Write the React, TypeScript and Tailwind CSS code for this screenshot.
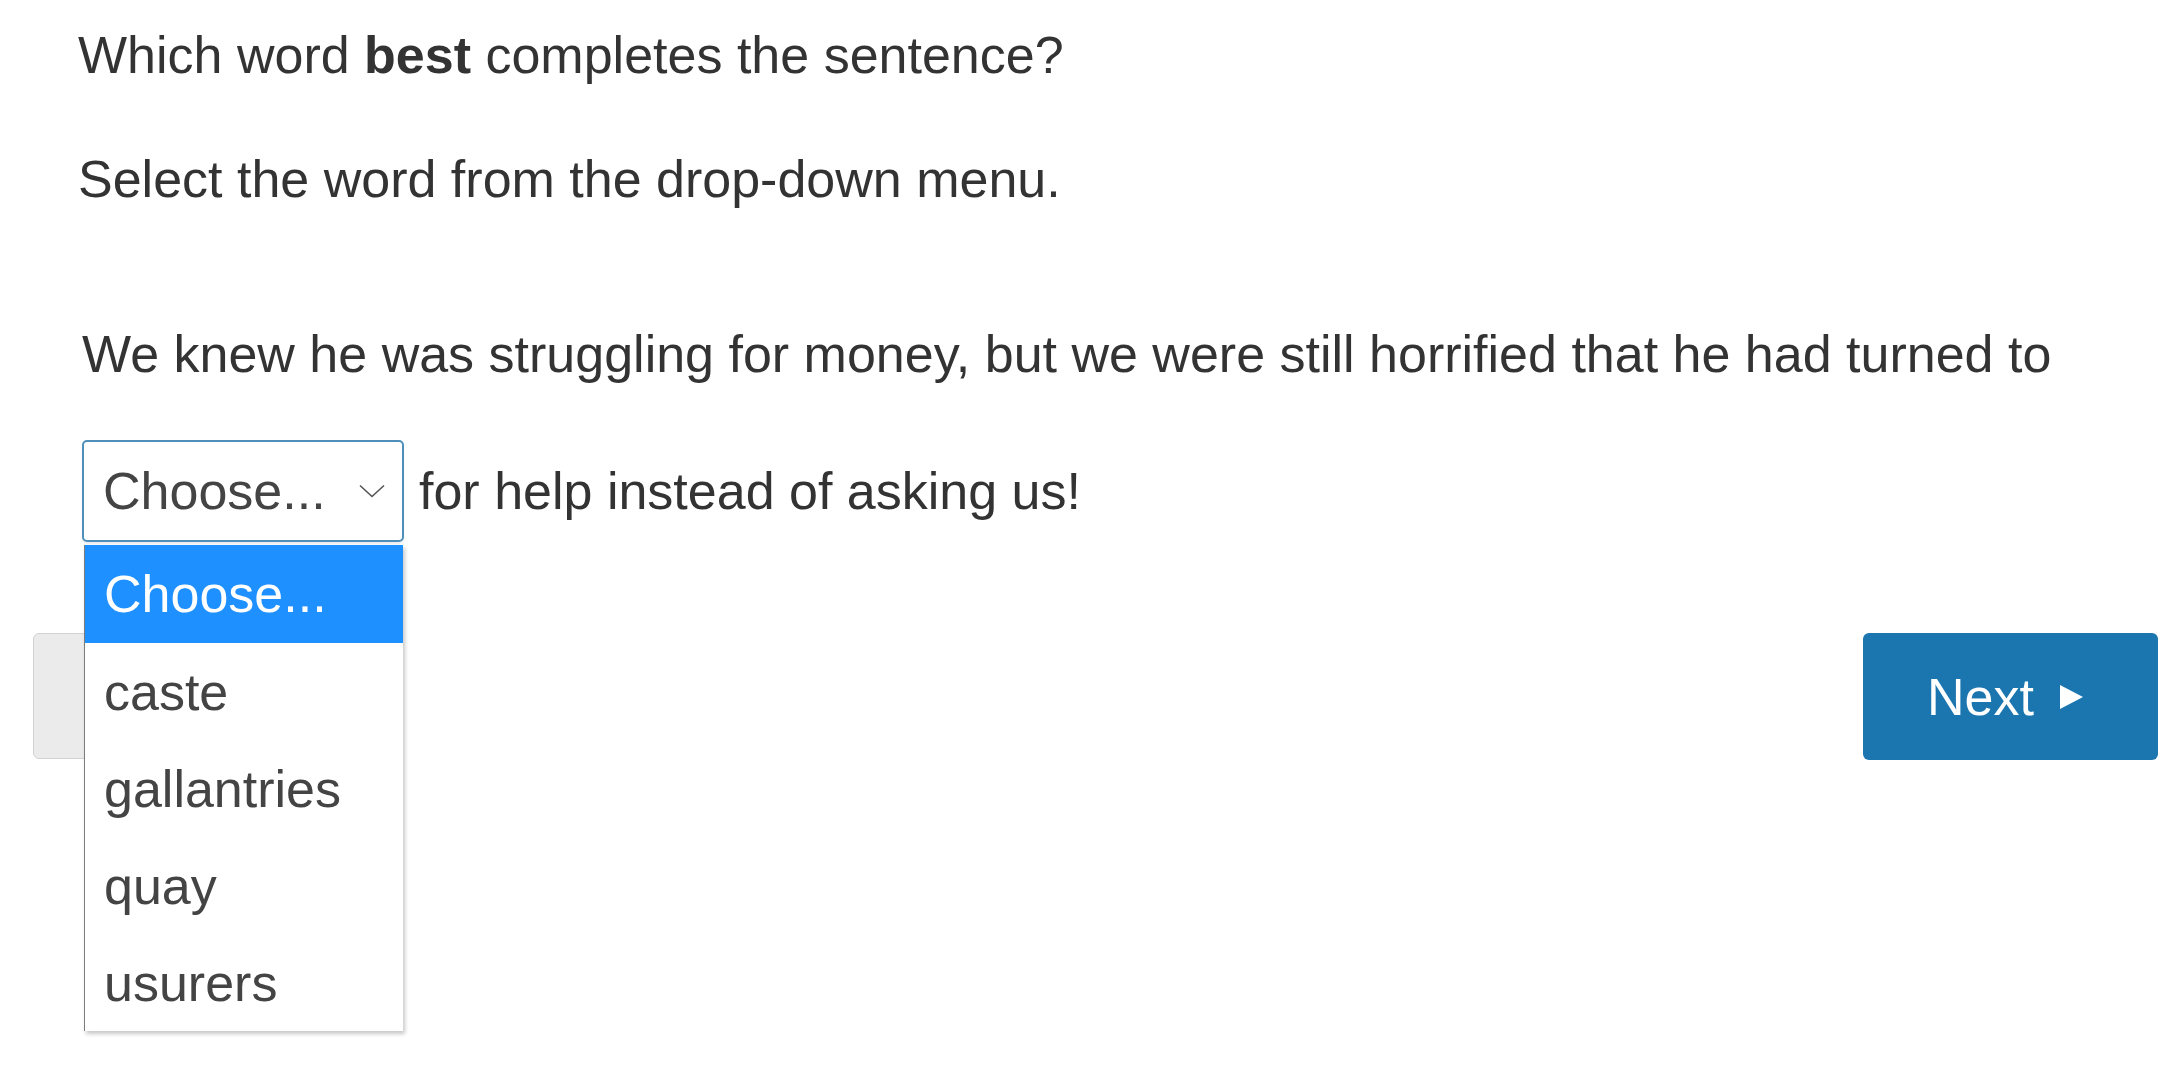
import React from "react";

const options = ["Choose...", "caste", "gallantries", "quay", "usurers"];

function Chevron() {
  return (
    <svg width="26" height="14" viewBox="0 0 26 14" fill="none">
      <path d="M1 1.5 L13 12.5 L25 1.5" stroke="#555" strokeWidth="1.6" />
    </svg>
  );
}

export default function App() {
  return (
    <div className="min-h-screen bg-white font-['Liberation_Sans',Arial,sans-serif] text-[52px] leading-[60px] text-[#333]">
      <div className="pl-[78px] pt-[25px]">
        <p>
          Which word <b>best</b> completes the sentence?
        </p>
        <p className="mt-[64px]">Select the word from the drop-down menu.</p>

        <div className="mt-[115px] pl-[4px]">
          <p>
            We knew he was struggling for money, but we were still horrified
            that he had turned to
          </p>
          <div className="mt-[56px] flex items-center">
            <div className="relative">
              {/* Select box */}
              <div className="flex h-[102px] w-[322px] items-center justify-between rounded-[5px] border-2 border-[#4f90bb] bg-white pl-[19px] pr-[17px] text-[#444] shadow-[0_2px_2px_rgba(0,0,0,0.08)]">
                <span>Choose...</span>
                <Chevron />
              </div>

              {/* Open option list */}
              <ul className="absolute left-[2px] top-[105px] z-10 w-[319px] border-l border-[#7d7d7d] bg-white shadow-[2px_3px_4px_rgba(0,0,0,0.22)]">
                {options.map((o, i) => (
                  <li
                    key={o}
                    className={
                      i === 0
                        ? "flex h-[98px] items-center bg-[#1e90ff] pl-[19px] text-white"
                        : "flex h-[97px] items-center pl-[19px] text-[#444]"
                    }
                  >
                    {o}
                  </li>
                ))}
              </ul>
            </div>
            <span className="ml-[15px]">for help instead of asking us!</span>
          </div>
        </div>
      </div>

      {/* Navigation buttons */}
      <div className="mt-[91px] flex items-start justify-between pl-[33px] pr-[24px]">
        <button
          aria-label="Back"
          className="h-[126px] w-[295px] rounded-[6px] border border-[#d2d2d2] bg-[#ebebeb]"
        />
        <button className="flex h-[127px] w-[295px] items-center rounded-[6px] bg-[#1b76b0] pl-[64px] text-white">
          <span>Next</span>
          <svg className="ml-[26px]" width="23" height="24" viewBox="0 0 23 24">
            <path d="M0 0 L23 12 L0 24 Z" fill="#fff" />
          </svg>
        </button>
      </div>
    </div>
  );
}
